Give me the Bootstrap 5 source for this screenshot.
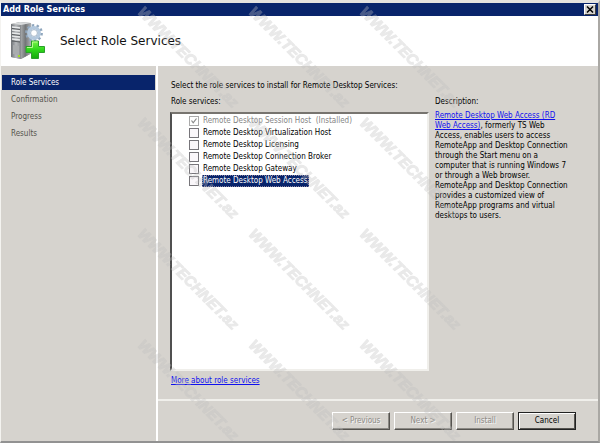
<!DOCTYPE html>
<html lang="en">
<head>
<meta charset="utf-8">
<meta name="viewport" content="width=device-width, initial-scale=1">
<title>Add Role Services</title>
<link href="https://cdn.jsdelivr.net/npm/bootstrap@5.3.0/dist/css/bootstrap.min.css" rel="stylesheet">
<style>
:root { --face:#d6d3ce; --navy:#08246b; }
body { font-family:"DejaVu Sans Condensed","Noto Sans",sans-serif; font-size:8px; line-height:12px; color:#000; background:var(--face); }
.wizard { border:1px solid #f4f3f0; border-top:3px solid #e4e2de; border-right:2px solid #aaa8a4; border-bottom:2px solid #929292; }
.title-bar { background:var(--navy); height:13px; padding:0 2px; font-size:9px; line-height:13px; color:#fff; }
.close-btn { width:12px; height:11px; padding:0; border:1px solid; border-color:#fff #404040 #404040 #fff; background:var(--face); }
.heading { height:50px; padding-left:9px; gap:14px; }
.heading h1 { font-family:"DejaVu Sans",sans-serif; font-size:12px; line-height:16px; color:#111; }
.steps { width:157px; border-right:2px solid #fff; padding-top:9px; }
.steps a { display:block; height:15px; line-height:15px; margin:0 1px 2px 1px; padding-left:9px; color:#55534d; text-decoration:none; }
.steps a.active { background:var(--navy); color:#fff; }
.page-body { padding:14px 20px 12px 12px; }
.page-body .caption { padding-left:1px; }
.role-box { background:#fff; border:2px solid; border-color:#77746f #f0efeb #f0efeb #505050; padding:1px 0 0 17px; }
.role-row { height:12px; gap:3px; }
.role-row label { padding:0 1px; line-height:12px; }
.role-row input { appearance:none; width:10px; height:10px; margin:0; border:1px solid #77757a; background:#faf7fa; border-radius:0; flex:none; }
.role-row input:disabled { border-color:#aaa; background:#fff url("data:image/svg+xml,%3Csvg xmlns='http://www.w3.org/2000/svg' viewBox='0 0 8 8'%3E%3Cpath d='M1.5 3.5 3.2 5.8 6.5 1.5' fill='none' stroke='%23888' stroke-width='1.2'/%3E%3C/svg%3E"); }
.role-row.installed { color:#858585; }
.role-row.selected label { background:var(--navy); color:#fff; outline:1px dotted #8a84a0; outline-offset:-1px; }
.role-col { width:259px; }
.page-body a { color:#1010ee; text-decoration:underline; }
.about { padding:0 7px 0 6px; }
.about p { line-height:10px; margin-top:3px; }
.actions { border-top:2px solid #f0efeb; padding:11px 22px 11px 0; }
.cmd { width:58px; height:18px; padding:0; font:inherit; line-height:14px; background:var(--face); color:#000; border:1px solid; border-color:#fff #55534f #55534f #fff; box-shadow:inset -1px -1px #8b8984; }
.cmd:disabled { color:#8e8b87; text-shadow:1px 1px #f5f5f5; }
.cmd.main { border-color:#222; box-shadow:inset 1px 1px #fff,inset -1px -1px #55534f; }
.stamp { inset:0; pointer-events:none; }
.stamp text { font:italic bold 15px "Liberation Sans",sans-serif; fill:#c0c0c0; stroke:#c0c0c0; stroke-width:1px; }
</style>
<script src="https://cdn.jsdelivr.net/npm/bootstrap@5.3.0/dist/js/bootstrap.bundle.min.js"></script>
</head>
<body>
<div class="wizard position-relative min-vh-100 d-flex flex-column">
  <div class="title-bar d-flex justify-content-between align-items-center">
    <strong>Add Role Services</strong>
    <button class="close-btn d-flex align-items-center justify-content-center" type="button" aria-label="Close">
      <svg width="8" height="7" viewBox="0 0 8 7"><path d="M1 .5 7 6.500M7 .5 1 6.500" stroke="#000" stroke-width="1.5"/></svg>
    </button>
  </div>
  <header class="heading d-flex align-items-center bg-white">
    <svg width="36" height="40" viewBox="0 0 36 40" aria-hidden="true">
      <defs>
        <linearGradient id="front" x2="1"><stop stop-color="#6d7175"/><stop offset=".5" stop-color="#b5b8bb"/><stop offset="1" stop-color="#86898c"/></linearGradient>
        <linearGradient id="side" x2="1"><stop stop-color="#a3a6a8"/><stop offset=".4" stop-color="#737678"/><stop offset="1" stop-color="#b9bcbe"/></linearGradient>
        <linearGradient id="plus" x2="0" y2="1"><stop stop-color="#7af34b"/><stop offset=".5" stop-color="#2fd61b"/><stop offset="1" stop-color="#15a90d"/></linearGradient>
      </defs>
      <path d="M1 3 10 1 21 2 22 32 11 38 1 36Z" fill="#888b8d"/>
      <path d="M1 3 11 4V38L1 36Z" fill="url(#front)"/>
      <path d="M11 4 21 2 22 32 11 38Z" fill="url(#side)"/>
      <path d="M1 3 10 1 21 2 11 4Z" fill="#d9dbdc"/>
      <path d="M2 6 10 7M2 9 10 10M2 12 10 13M2 15 10 16M2 18 10 19" stroke="#e8eaeb" stroke-width="1.3"/>
      <path d="M2 7.5 10 8.5M2 13.5 10 14.5M2 20 10 21" stroke="#4c5053" stroke-width=".8"/>
      <path d="M3 24 9 25V34L3 33Z" fill="#a9acae"/><path d="M8 34h2v2H8Z" fill="#a2dc26"/>
      <circle cx="24" cy="12" r="7.6" fill="none" stroke="#8fa6bd" stroke-width="2.6" stroke-dasharray="2.4 2.37"/>
      <circle cx="24" cy="12" r="5.3" fill="#eef5fb" stroke="#b3c8dd" stroke-width="3.2"/>
      <circle cx="24" cy="12" r="3.4" fill="#fff" stroke="#879eb4" stroke-width=".7"/>
      <path d="M21.500 20H28.500V25.500H34.500V31.500H28.500V37.500H21.500V31.500H16V25.500H21.500Z" fill="url(#plus)" stroke="#2ba02a" stroke-width="1"/>
      <path d="M22.500 21H27.500M22.500 21V26.500H17" fill="none" stroke="#b7ff8d"/>
    </svg>
    <h1 class="m-0 fw-normal">Select Role Services</h1>
  </header>
  <div class="d-flex flex-grow-1">
    <nav class="steps flex-shrink-0" aria-label="Steps">
      <a class="active" href="#" aria-current="step">Role Services</a>
      <a href="#">Confirmation</a>
      <a href="#">Progress</a>
      <a href="#">Results</a>
    </nav>
    <div class="flex-grow-1 d-flex flex-column">
      <main class="page-body flex-grow-1 d-flex flex-column">
        <p class="caption mb-1">Select the role services to install for Remote Desktop Services:</p>
        <div class="d-flex flex-grow-1">
          <section class="role-col flex-shrink-0 d-flex flex-column">
            <div class="caption">Role services:</div>
            <div class="role-box flex-grow-1 mt-1">
              <div class="role-row installed d-flex align-items-center"><input type="checkbox" id="r1" checked disabled><label for="r1">Remote Desktop Session Host &nbsp;(Installed)</label></div>
              <div class="role-row d-flex align-items-center"><input type="checkbox" id="r2"><label for="r2">Remote Desktop Virtualization Host</label></div>
              <div class="role-row d-flex align-items-center"><input type="checkbox" id="r3"><label for="r3">Remote Desktop Licensing</label></div>
              <div class="role-row d-flex align-items-center"><input type="checkbox" id="r4"><label for="r4">Remote Desktop Connection Broker</label></div>
              <div class="role-row d-flex align-items-center"><input type="checkbox" id="r5"><label for="r5">Remote Desktop Gateway</label></div>
              <div class="role-row selected d-flex align-items-center"><input type="checkbox" id="r6"><label for="r6">Remote Desktop Web Access</label></div>
            </div>
            <div class="caption mt-1"><a href="#">More about role services</a></div>
          </section>
          <section class="about flex-grow-1">
            <div>Description:</div>
            <p class="mb-0"><a href="#">Remote Desktop Web Access (RD Web Access)</a>, formerly TS Web Access, enables users to access RemoteApp and Desktop Connection through the Start menu on a computer that is running Windows 7 or through a Web browser. RemoteApp and Desktop Connection provides a customized view of RemoteApp programs and virtual desktops to users.</p>
          </section>
        </div>
      </main>
      <footer class="actions d-flex justify-content-end">
        <button class="cmd" type="button" disabled>&lt; Previous</button>
        <button class="cmd ms-1" type="button" disabled>Next &gt;</button>
        <button class="cmd ms-1" type="button" disabled>Install</button>
        <button class="cmd main ms-1" type="button">Cancel</button>
      </footer>
    </div>
  </div>
  <svg class="stamp position-absolute w-100 h-100" aria-hidden="true">
    <defs>
      <text id="wm" transform="rotate(45)">WWW.TECHNET.az</text>
    </defs>
    <g opacity=".35">
      <use href="#wm" x="136" y="10"/><use href="#wm" x="247" y="10"/><use href="#wm" x="358" y="10"/>
      <use href="#wm" x="136" y="121"/><use href="#wm" x="247" y="121"/><use href="#wm" x="358" y="121"/>
      <use href="#wm" x="136" y="232"/><use href="#wm" x="247" y="232"/><use href="#wm" x="358" y="232"/>
      <use href="#wm" x="136" y="343"/><use href="#wm" x="247" y="343"/><use href="#wm" x="358" y="343"/>
    </g>
  </svg>
</div>
</body>
</html>
